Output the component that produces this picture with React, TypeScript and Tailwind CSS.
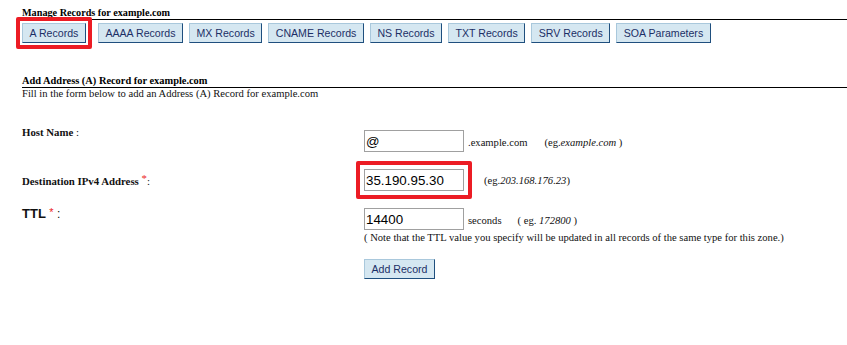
import React from "react";

const TABS = [
  "A Records",
  "AAAA Records",
  "MX Records",
  "CNAME Records",
  "NS Records",
  "TXT Records",
  "SRV Records",
  "SOA Parameters",
];

const serif = "font-['Liberation_Serif',serif]";
const sans = "font-['Liberation_Sans',Arial,sans-serif]";

function Btn({ label }: { label: string }) {
  return (
    <button
      className={`${sans} h-[20px] px-[6.5px] text-[10.6px] leading-none text-[#1c2f66] bg-[#d5e7f1] border border-t-[#a9c8dc] border-l-[#a9c8dc] border-r-[#1f4f7e] border-b-[#1f4f7e]`}
    >
      {label}
    </button>
  );
}

function Field({
  value,
  highlight,
}: {
  value: string;
  highlight?: boolean;
}) {
  const input = (
    <input
      readOnly
      value={value}
      className={`${sans} w-[100px] h-[22px] px-[1px] text-[13.33px] text-black border border-[#a0a0a0] bg-white outline-none`}
    />
  );
  if (!highlight) return input;
  return (
    <div className="-m-[8px] p-[4px] border-[4px] border-[#ec1c24] rounded-[2px] flex">
      {input}
    </div>
  );
}

export default function App() {
  return (
    <div className={`${serif} w-[847px] h-[345px] bg-white text-[#111] pl-[22px] pt-[7px]`}>
      {/* Manage records */}
      <div className="font-bold text-[10.2px] leading-[12px] text-black border-b-[1.5px] border-black">
        Manage Records for example.com
      </div>
      <div className="flex gap-[6px] mt-[3px]">
        {TABS.map((t, i) =>
          i === 0 ? (
            <div
              key={t}
              className="-m-[6px] mr-0 p-[2px] border-[4px] border-[#ec1c24] rounded-[2px] flex"
            >
              <Btn label={t} />
            </div>
          ) : (
            <Btn key={t} label={t} />
          )
        )}
      </div>

      {/* Add record */}
      <div className="mt-[32px] font-bold text-[10.4px] leading-[12px] text-black border-b-[1.5px] border-black">
        Add Address (A) Record for example.com
      </div>
      <div className="text-[10.6px] leading-[12px]">
        Fill in the form below to add an Address (A) Record for example.com
      </div>

      <div className="mt-[30px] flex flex-col">
        <div className="flex h-[22px]">
          <div className="w-[342px] font-bold text-[10.8px] leading-none -mt-[3px]">
            Host Name <span className="font-normal">:</span>
          </div>
          <div className="flex items-center text-[10.6px]">
            <Field value="@" />
            <span className="ml-[4px] mt-[3px]">.example.com</span>
            <span className="ml-[17px] mt-[3px]">
              (eg.<i>example.com</i> )
            </span>
          </div>
        </div>

        <div className="flex h-[22px] mt-[17px] items-center">
          <div className="w-[342px] font-bold text-[10.8px]">
            Destination IPv4 Address <span className="text-[#ec1c24] font-normal align-[3px]">*</span>
            <span className="font-normal">:</span>
          </div>
          <div className="flex items-center text-[10.6px]">
            <Field value="35.190.95.30" highlight />
            <span className="ml-[20px] mt-[2px]">
              (eg.<i>203.168.176.23</i>)
            </span>
          </div>
        </div>

        <div className="flex mt-[17px]">
          <div className={`w-[342px] ${sans} font-bold text-[13px] leading-[16px] -mt-[4px]`}>
            TTL <span className="text-[#ec1c24] font-normal text-[11px] align-[2px]">*</span>{" "}
            <span className="font-normal text-[12px]">:</span>
          </div>
          <div className="flex flex-col text-[10.6px]">
            <div className="flex items-center">
              <Field value="14400" />
              <span className="ml-[4px] mt-[3px]">seconds</span>
              <span className="ml-[16px] mt-[3px]">
                ( eg. <i>172800</i> )
              </span>
            </div>
            <div className="leading-[13px] mt-[1px]">
              ( Note that the TTL value you specify will be updated in all records of the same type for this zone.)
            </div>
            <div className="mt-[15px]">
              <Btn label="Add Record" />
            </div>
          </div>
        </div>
      </div>
    </div>
  );
}
